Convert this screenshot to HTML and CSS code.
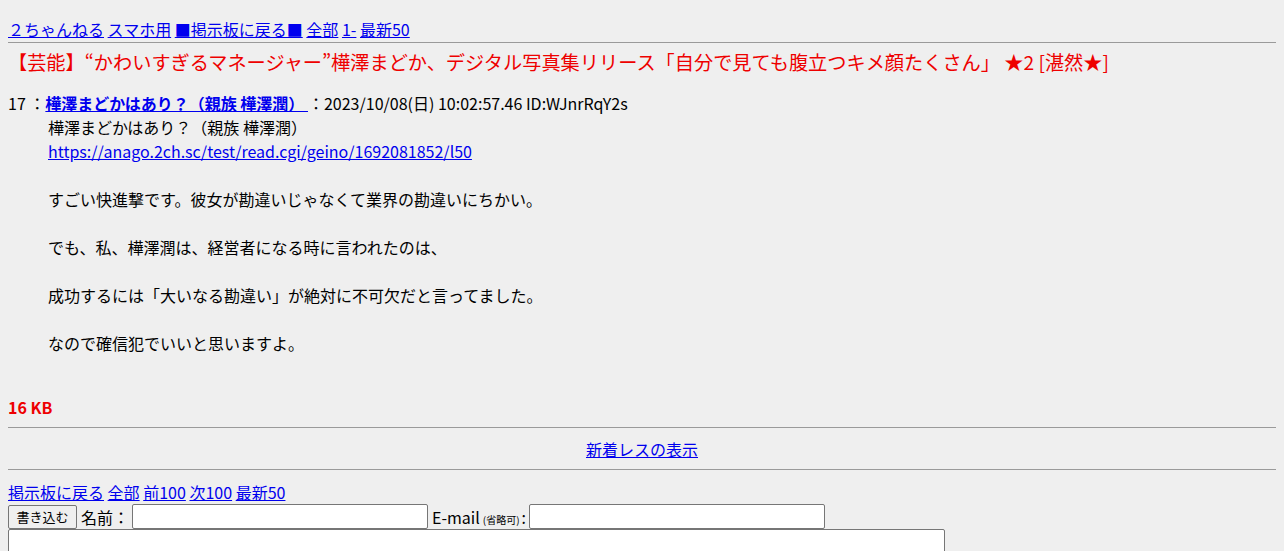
FILE: index.html
```html
<!DOCTYPE html>
<html lang="ja">
<head>
<meta charset="utf-8">
<title>【芸能】“かわいすぎるマネージャー”樺澤まどか</title>
<link rel="stylesheet" href="styles.css">
</head>
<body>
<div class="page">
  <div class="topnav">
    <a href="#">２ちゃんねる</a> <a href="#">スマホ用</a> <a href="#">■掲示板に戻る■</a> <a href="#">全部</a> <a href="#">1-</a> <a href="#">最新50</a>
  </div>
  <hr class="rule rule-top">
  <h1 class="title">【芸能】“かわいすぎるマネージャー”樺澤まどか、デジタル写真集リリース「自分で見ても腹立つキメ顔たくさん」 ★2 [湛然★]</h1>
  <dl class="thread">
    <dt class="post-head">17 ：<a class="name" href="#">樺澤まどかはあり？（親族 樺澤潤） </a>：2023/10/08(日) 10:02:57.46 ID:WJnrRqY2s</dt>
    <dd class="post-body">樺澤まどかはあり？（親族 樺澤潤）<br><a href="#">https://anago.2ch.sc/test/read.cgi/geino/1692081852/l50</a><br><br>すごい快進撃です。彼女が勘違いじゃなくて業界の勘違いにちかい。<br><br>でも、私、樺澤潤は、経営者になる時に言われたのは、<br><br>成功するには「大いなる勘違い」が絶対に不可欠だと言ってました。<br><br>なので確信犯でいいと思いますよ。</dd>
  </dl>
  <div class="size">16 KB</div>
  <hr class="rule rule-a">
  <div class="newres"><a href="#">新着レスの表示</a></div>
  <hr class="rule rule-b">
  <div class="botnav">
    <a href="#">掲示板に戻る</a> <a href="#">全部</a> <a href="#">前100</a> <a href="#">次100</a> <a href="#">最新50</a>
  </div>
  <form class="post-form">
    <div class="form-row">
      <button type="button" class="submit">書き込む</button>
      <label class="lbl">名前：</label>
      <input type="text" class="field">
      <label class="lbl">E-mail<span class="small">(省略可)</span>:</label>
      <input type="text" class="field">
    </div>
    <textarea class="message"></textarea>
  </form>
</div>
</body>
</html>
```

FILE: styles.css
```css
html, body {
  background: #efefef;
}
body {
  margin: 8px;
  font-family: "Noto Sans CJK JP", "Noto Sans", sans-serif;
  font-size: 16px;
  color: #000;
}
a {
  color: #0000ee;
}
.page {
  display: flex;
  flex-direction: column;
}
.topnav {
  margin-top: 10px;
  line-height: 23px;
  white-space: nowrap;
}
.rule {
  border: 0;
  border-top: 1px solid #9a9a9a;
  height: 0;
  margin: 0;
  width: 100%;
}
.rule-top {
  margin-top: 1px;
}
.title {
  margin: 5px 0 0;
  font-size: 19.2px;
  font-weight: normal;
  line-height: 28px;
  color: #ee0000;
  white-space: nowrap;
}
.thread {
  margin: 15px 0 0;
}
.post-head {
  line-height: 24px;
  white-space: nowrap;
}
.name {
  font-weight: bold;
}
.post-body {
  margin: 0 0 0 40px;
  line-height: 24px;
}
.size {
  margin-top: 40px;
  line-height: 24px;
  font-weight: bold;
  color: #ee0000;
}
.rule-a {
  margin-top: 8px;
}
.newres {
  margin-top: 9px;
  line-height: 24px;
  text-align: center;
}
.rule-b {
  margin-top: 8px;
}
.botnav {
  margin-top: 11px;
  line-height: 23px;
}
.post-form {
  margin: 0;
  display: flex;
  flex-direction: column;
  align-items: flex-start;
}
.form-row {
  display: flex;
  align-items: center;
  height: 25px;
}
.submit {
  font-family: "Noto Sans CJK JP", sans-serif;
  font-size: 13px;
  height: 24px;
  width: 69px;
  padding: 0;
  background: #efefef;
  border: 1px solid #767676;
  border-radius: 2px;
  color: #000;
}
.lbl {
  margin-left: 4px;
  white-space: nowrap;
}
.small {
  font-size: 10px;
  margin: 0 2px 0 3px;
}
.field {
  width: 296px;
  height: 25px;
  box-sizing: border-box;
  border: 1px solid #767676;
  border-radius: 2px;
  background: #fff;
  padding: 0 2px;
  margin: 0 0 0 3px;
}
.message {
  width: 937px;
  height: 100px;
  box-sizing: border-box;
  border: 1px solid #767676;
  border-radius: 2px;
  background: #fff;
  margin: 0;
  resize: none;
}
```
